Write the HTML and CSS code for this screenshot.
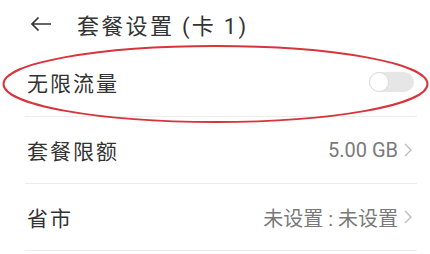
FILE: index.html
```html
<!DOCTYPE html>
<html lang="zh-CN">
<head>
    <meta charset="UTF-8">
    <meta name="viewport" content="width=device-width, initial-scale=1.0">
    <title>套餐设置</title>
    <link rel="stylesheet" href="styles.css">
</head>
<body>
    <div class="page">
        <!-- Header -->
        <div class="header">
            <svg class="back" width="22" height="16" viewBox="0 0 22 16">
                <path d="M21 8H2M8.5 1.5L2 8l6.5 6.5" fill="none" stroke="#333" stroke-width="1.7"/>
            </svg>
            <h1 class="title">套餐设置 (卡 1)</h1>
        </div>

        <div class="list">
            <div class="row row-first">
                <span class="label">无限流量</span>
                <span class="switch"><span class="knob"></span></span>
            </div>
            <div class="row">
                <span class="label">套餐限额</span>
                <span class="value">5.00 GB
                    <svg class="chev" width="8" height="14" viewBox="0 0 8 14"><path d="M1 1l6 6-6 6" fill="none" stroke="#bdbdbd" stroke-width="1.4"/></svg>
                </span>
            </div>
            <div class="row">
                <span class="label">省市</span>
                <span class="value">未设置 : 未设置
                    <svg class="chev" width="8" height="14" viewBox="0 0 8 14"><path d="M1 1l6 6-6 6" fill="none" stroke="#bdbdbd" stroke-width="1.4"/></svg>
                </span>
            </div>
        </div>

        <!-- red annotation circle -->
        <svg class="mark" width="430" height="254" viewBox="0 0 430 254">
            <ellipse cx="215.5" cy="84" rx="212" ry="38" fill="none" stroke="#d8343c" stroke-width="2"/>
        </svg>
    </div>
</body>
</html>
```

FILE: styles.css
```css
body {
    margin: 0;
    padding: 0;
    background-color: #ffffff;
    font-family: Roboto, "Noto Sans CJK SC", sans-serif;
    color: #333333;
}
.page {
    position: relative;
    width: 430px;
    height: 254px;
    overflow: hidden;
}
.header {
    height: 48px;
    display: flex;
    align-items: center;
    padding-left: 30px;
}
.back {
    margin-right: 25px;
}
.title {
    margin: 0;
    font-size: 22px;
    font-weight: normal;
    letter-spacing: 2.3px;
    color: #333333;
}
.list {
    padding: 0 13px 0 25px;
}
.row {
    height: 66px;
    display: flex;
    align-items: center;
    justify-content: space-between;
    border-bottom: 1px solid #ececec;
}
.row-first {
    height: 68px;
}
.label {
    font-size: 21px;
    letter-spacing: 2px;
    padding-left: 2px;
}
.value {
    display: flex;
    align-items: center;
    font-size: 20px;
    color: #7a7a7a;
}
.chev {
    margin-left: 6px;
    margin-right: 5px;
}
.switch {
    position: relative;
    width: 45px;
    height: 20px;
    margin-right: 3px;
    border-radius: 10px;
    background-color: #e6e6e6;
}
.knob {
    position: absolute;
    left: 0;
    top: 0;
    width: 18px;
    height: 18px;
    border-radius: 50%;
    background-color: #ffffff;
    border: 1px solid #dddddd;
}
.mark {
    position: absolute;
    left: 0;
    top: 0;
}
```
